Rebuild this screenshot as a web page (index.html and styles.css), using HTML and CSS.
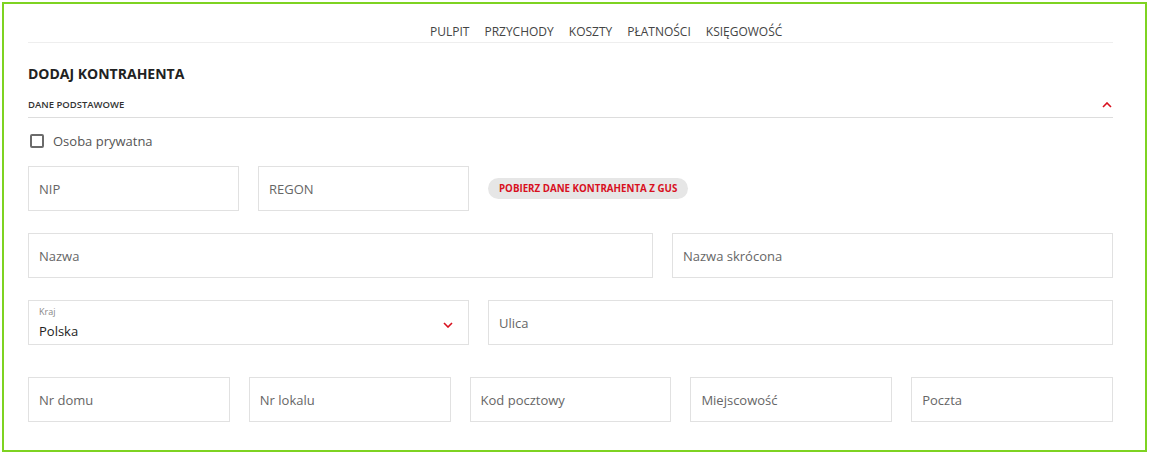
FILE: index.html
```html
<!DOCTYPE html>
<html lang="pl">
<head>
<meta charset="utf-8">
<title>Dodaj kontrahenta</title>
<link rel="stylesheet" href="styles.css">
</head>
<body>
<div class="frame">
  <nav class="nav">
    <a class="nav-item">PULPIT</a>
    <a class="nav-item">PRZYCHODY</a>
    <a class="nav-item">KOSZTY</a>
    <a class="nav-item">PŁATNOŚCI</a>
    <a class="nav-item">KSIĘGOWOŚĆ</a>
  </nav>

  <h1 class="title">DODAJ KONTRAHENTA</h1>

  <div class="section-head">
    <span class="section-title">DANE PODSTAWOWE</span>
    <svg class="chev" width="10" height="6" viewBox="0 0 10 6"><polyline points="1,5 5,1 9,5" fill="none" stroke="#d8101e" stroke-width="1.6"/></svg>
  </div>

  <label class="check-row">
    <span class="checkbox"></span>
    <span class="check-label">Osoba prywatna</span>
  </label>

  <div class="row row-first">
    <div class="span5 pair">
      <div class="field"><span class="ph">NIP</span></div>
      <div class="field"><span class="ph">REGON</span></div>
    </div>
    <div class="span7 btn-cell">
      <button class="gus-btn">POBIERZ DANE KONTRAHENTA Z GUS</button>
    </div>
  </div>

  <div class="row">
    <div class="span7 field"><span class="ph">Nazwa</span></div>
    <div class="span5 field"><span class="ph">Nazwa skrócona</span></div>
  </div>

  <div class="row">
    <div class="span5 field select">
      <div class="select-text">
        <span class="select-label">Kraj</span>
        <span class="select-value">Polska</span>
      </div>
      <svg class="chev" width="10" height="6" viewBox="0 0 10 6"><polyline points="1,1 5,5 9,1" fill="none" stroke="#d8101e" stroke-width="1.6"/></svg>
    </div>
    <div class="span7 field"><span class="ph">Ulica</span></div>
  </div>

  <div class="row5">
    <div class="field"><span class="ph">Nr domu</span></div>
    <div class="field"><span class="ph">Nr lokalu</span></div>
    <div class="field"><span class="ph">Kod pocztowy</span></div>
    <div class="field"><span class="ph">Miejscowość</span></div>
    <div class="field"><span class="ph">Poczta</span></div>
  </div>
</div>
</body>
</html>
```

FILE: styles.css
```css
* { box-sizing: border-box; }

body {
  margin: 2px;
  font-family: "Open Sans", "Noto Sans", Arial, sans-serif;
  color: #333;
  background: #fff;
}

.frame {
  width: 1145px;
  height: 450px;
  border: 2px solid #7ed321;
  padding: 0 32px 0 24px;
}

.nav {
  display: flex;
  gap: 15px;
  padding: 19px 0 1px 402px;
  border-bottom: 1px solid #eeeeee;
}

.nav-item {
  font-size: 12px;
  line-height: 18px;
  color: #444;
  text-decoration: none;
}

.title {
  margin: 21px 0 0;
  font-size: 14px;
  line-height: 20px;
  font-weight: 700;
  color: #222;
}

.section-head {
  margin-top: 14px;
  display: flex;
  justify-content: space-between;
  align-items: center;
  padding-bottom: 5px;
  border-bottom: 1px solid #dddddd;
}

.section-title {
  font-size: 9.5px;
  line-height: 14px;
  font-weight: 600;
  color: #333;
}

.section-head .chev { margin-right: 1px; }

.check-row {
  margin-top: 14px;
  display: flex;
  align-items: center;
  height: 18px;
}

.checkbox {
  width: 14px;
  height: 14px;
  margin-left: 2px;
  border: 2px solid #6b6b6b;
  border-radius: 2px;
}

.check-label {
  margin-left: 9px;
  font-size: 13px;
  line-height: 18px;
  color: #555;
}

.row {
  display: grid;
  grid-template-columns: repeat(12, 1fr);
  column-gap: 19px;
  margin-top: 22px;
}

.row-first { margin-top: 16px; }

.span5 { grid-column: span 5; }
.span7 { grid-column: span 7; }

.pair {
  display: grid;
  grid-template-columns: 1fr 1fr;
  column-gap: 19px;
}

.field {
  height: 45px;
  border: 1px solid #e1e1e1;
  padding: 0 10px;
  display: flex;
  align-items: center;
}

.ph {
  font-size: 13px;
  line-height: 18px;
  color: #666;
}

.btn-cell {
  display: flex;
  align-items: center;
}

.gus-btn {
  height: 21px;
  padding: 0 11px;
  border: none;
  border-radius: 11px;
  background: #e6e6e6;
  color: #d8101e;
  font-family: inherit;
  font-size: 9.75px;
  font-weight: 700;
  line-height: 21px;
}

.select {
  justify-content: space-between;
  align-items: flex-start;
  padding-top: 5px;
}

.select-text {
  display: flex;
  flex-direction: column;
}

.select-label {
  font-size: 9px;
  line-height: 12px;
  color: #888;
}

.select-value {
  margin-top: 4px;
  font-size: 13px;
  line-height: 18px;
  color: #222;
}

.select .chev {
  margin-top: 16px;
  margin-right: 5px;
}

.row5 {
  display: grid;
  grid-template-columns: repeat(5, 1fr);
  column-gap: 19px;
  margin-top: 32px;
}
```
